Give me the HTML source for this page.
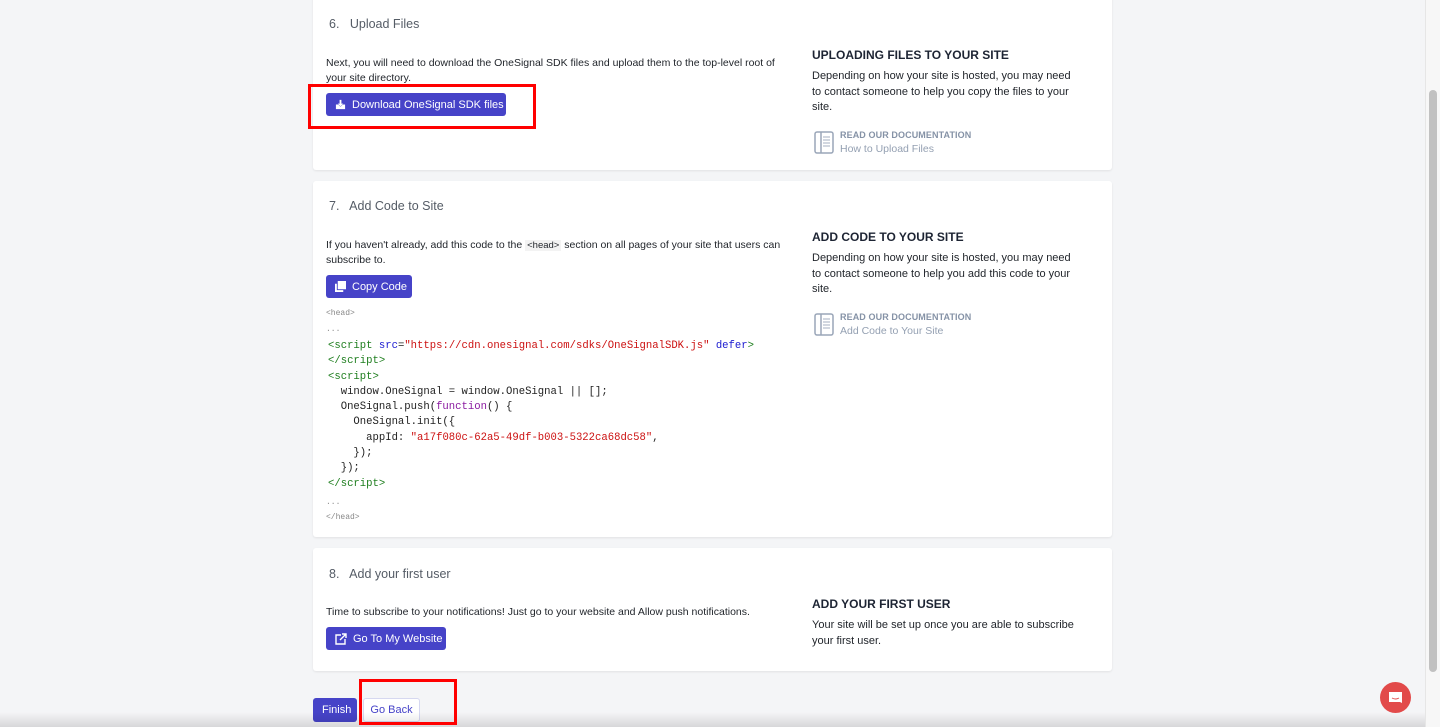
<!DOCTYPE html>
<html><head><style>
*{margin:0;padding:0;box-sizing:border-box}
body{width:1440px;height:727px;overflow:hidden;background:#f4f5f7;font-family:"Liberation Sans",sans-serif;position:relative;color:#1f2329}
.card{position:absolute;left:313px;width:799px;background:#fff;border-radius:3px;box-shadow:0 1px 2px rgba(0,0,0,.08)}
.t{position:absolute;font-size:12.5px;color:#555c66}
.p{position:absolute;font-size:10.5px;line-height:15px;color:#1f2329}
.btn{position:absolute;height:23px;background:#4643c8;color:#fff;font-size:11px;border-radius:3px;display:flex;align-items:center;padding:0 9px;gap:6px;white-space:nowrap}
.btn svg{flex-shrink:0}
.h{position:absolute;font-size:12px;font-weight:bold;color:#1d2433}
.rp{position:absolute;font-size:11px;line-height:15.5px;color:#1f2329;width:268px}
.doc{position:absolute;font-size:9.5px;color:#8592a6}
.doc b{display:block;font-size:9px;letter-spacing:.1px}
.doc span{display:block;font-size:10.5px;margin-top:3px;color:#94a0b2}
.code{position:absolute;font-family:"Liberation Mono",monospace;font-size:10.6px;line-height:15.3px;white-space:pre;color:#222}
.g{color:#1e7e1e}.b{color:#1a1ad0}.r{color:#c11}.pu{color:#8a1aa0}
.sm{position:absolute;font-family:"Liberation Mono",monospace;font-size:8px;color:#888}
.red{position:absolute;border:3px solid #f00}
</style></head><body>
<div class="card" style="top:-5px;height:175px"></div>
<div class="card" style="top:181px;height:356px"></div>
<div class="card" style="top:548px;height:123px"></div>

<div class="t" style="left:329px;top:17px">6.&nbsp;&nbsp; Upload Files</div>
<div class="p" style="left:326px;top:56px;width:460px">Next, you will need to download the OneSignal SDK files and upload them to the top-level root of your site directory.</div>
<div class="btn" style="left:326px;top:93px;width:180px"><svg width="11" height="11" viewBox="0 0 12 12"><path d="M1 6v5h10V6H8.5L6 8.5 3.5 6z M5 1h2v4h2L6 8 3 5h2z" fill="#fff"/></svg>Download OneSignal SDK files</div>
<div class="h" style="left:812px;top:48px">UPLOADING FILES TO YOUR SITE</div>
<div class="rp" style="left:812px;top:69px">Depending on how your site is hosted, you may need to contact someone to help you copy the files to your site.</div>
<svg style="position:absolute;left:814px;top:131px" width="20" height="23" viewBox="0 0 20 23"><rect x="1" y="1" width="18" height="21" rx="2" fill="none" stroke="#9aa6b8" stroke-width="1.5"/><line x1="7" y1="1" x2="7" y2="22" stroke="#9aa6b8" stroke-width="1.5"/><path d="M9 6h7M9 9h7M9 12h7M9 15h7" stroke="#c3cad6" stroke-width="1.5"/></svg>
<div class="doc" style="left:840px;top:130px"><b>READ OUR DOCUMENTATION</b><span>How to Upload Files</span></div>

<div class="t" style="left:329px;top:199px">7.&nbsp;&nbsp; Add Code to Site</div>
<div class="p" style="left:326px;top:238px;width:470px">If you haven't already, add this code to the <span style="background:#f3f3f3;font-size:9.5px;padding:0 2px">&lt;head&gt;</span> section on all pages of your site that users can subscribe to.</div>
<div class="btn" style="left:326px;top:275px;width:86px"><svg width="11" height="11" viewBox="0 0 12 12"><rect x="3" y="0" width="9" height="9" fill="#fff"/><path d="M0 3h2v7h7v2H0z" fill="#fff"/></svg>Copy Code</div>
<div class="sm" style="left:326px;top:309px">&lt;head&gt;</div>
<div class="sm" style="left:326px;top:325px">...</div>
<div class="code" style="left:328px;top:339px"><span class="g">&lt;script</span> <span class="b">src</span>=<span class="r">"https://cdn.onesignal.com/sdks/OneSignalSDK.js"</span> <span class="b">defer</span><span class="g">&gt;</span>
<span class="g">&lt;/script&gt;</span>
<span class="g">&lt;script&gt;</span>
  window.OneSignal = window.OneSignal || [];
  OneSignal.push(<span class="pu">function</span>() {
    OneSignal.init({
      appId: <span class="r">"a17f080c-62a5-49df-b003-5322ca68dc58"</span>,
    });
  });
<span class="g">&lt;/script&gt;</span></div>
<div class="sm" style="left:326px;top:498px">...</div>
<div class="sm" style="left:326px;top:513px">&lt;/head&gt;</div>
<div class="h" style="left:812px;top:230px">ADD CODE TO YOUR SITE</div>
<div class="rp" style="left:812px;top:251px">Depending on how your site is hosted, you may need to contact someone to help you add this code to your site.</div>
<svg style="position:absolute;left:814px;top:313px" width="20" height="23" viewBox="0 0 20 23"><rect x="1" y="1" width="18" height="21" rx="2" fill="none" stroke="#9aa6b8" stroke-width="1.5"/><line x1="7" y1="1" x2="7" y2="22" stroke="#9aa6b8" stroke-width="1.5"/><path d="M9 6h7M9 9h7M9 12h7M9 15h7" stroke="#c3cad6" stroke-width="1.5"/></svg>
<div class="doc" style="left:840px;top:312px"><b>READ OUR DOCUMENTATION</b><span>Add Code to Your Site</span></div>

<div class="t" style="left:329px;top:567px">8.&nbsp;&nbsp; Add your first user</div>
<div class="p" style="left:326px;top:605px;width:470px">Time to subscribe to your notifications! Just go to your website and Allow push notifications.</div>
<div class="btn" style="left:326px;top:627px;width:120px"><svg width="12" height="12" viewBox="0 0 12 12" fill="none" stroke="#fff" stroke-width="1.4"><path d="M6 2H1v9h9V6M7 1h4v4M11 1L5 7"/></svg>Go To My Website</div>
<div class="h" style="left:812px;top:597px">ADD YOUR FIRST USER</div>
<div class="rp" style="left:812px;top:618px">Your site will be set up once you are able to subscribe your first user.</div>

<div class="btn" style="left:313px;top:698px;width:44px;height:24px;font-size:11px">Finish</div>
<div style="position:absolute;left:363px;top:698px;width:57px;height:24px;border:1px solid #d6d8f0;background:#fff;color:#4643c8;font-size:11px;border-radius:3px;text-align:center;line-height:22px">Go Back</div>
<div style="position:absolute;left:0;top:712px;width:1425px;height:15px;background:linear-gradient(rgba(0,0,0,0),rgba(0,0,0,.12))"></div>

<div class="red" style="left:308px;top:84px;width:228px;height:45px"></div>
<div class="red" style="left:359px;top:679px;width:98px;height:46px"></div>

<div style="position:absolute;left:1425px;top:0;width:15px;height:727px;background:#f7f7f7;border-left:1px solid #e6e6e6"></div>
<div style="position:absolute;left:1429px;top:90px;width:8px;height:582px;border-radius:4px;background:#c1c1c1"></div>
<div style="position:absolute;left:1380px;top:682px;width:31px;height:31px;border-radius:50%;background:#e24a4a"></div>
<svg style="position:absolute;left:1388px;top:690px" width="15" height="15" viewBox="0 0 15 15"><path d="M1 2h13v11l-2-1H1z" fill="#fff"/><path d="M4 8q3.5 2 7 0" stroke="#e24a4a" stroke-width="1" fill="none"/></svg>
</body></html>
